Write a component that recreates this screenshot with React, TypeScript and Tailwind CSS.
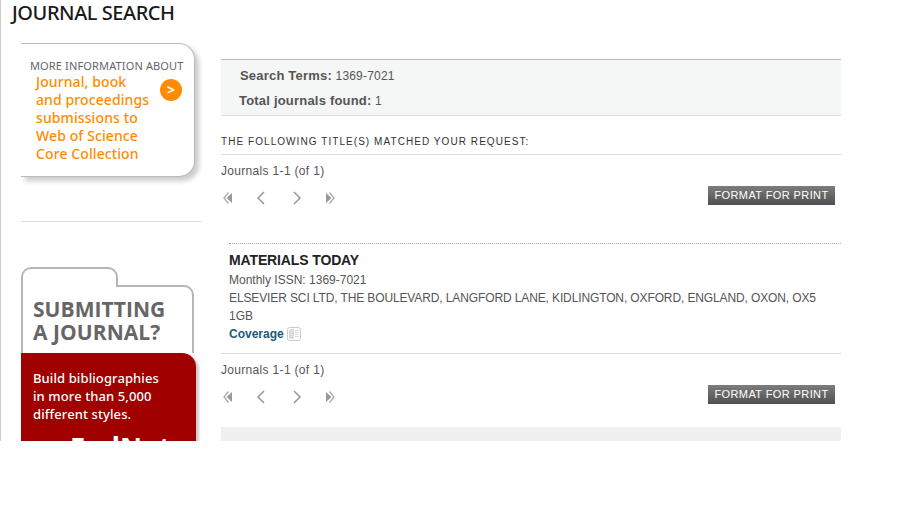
import React from "react";

function Pager() {
  return (
    <div className="flex items-center justify-between pr-[6px] h-[19px]">
      <div className="flex items-center pl-[2px] h-[19px] pt-[5px]">
        <svg width="10" height="14" viewBox="0 0 10 14" className="mr-[23px]">
          <path d="M5.5 1.5 L1 7 L5.5 12.5" fill="none" stroke="#aaa" strokeWidth="1.3" />
          <path d="M9 2 L3.5 7 L9 12 Z" fill="#999" />
        </svg>
        <svg width="9" height="14" viewBox="0 0 9 14" className="mr-[28px]">
          <path d="M8 1 L2 7 L8 13" fill="none" stroke="#999" strokeWidth="1.5" />
        </svg>
        <svg width="9" height="14" viewBox="0 0 9 14" className="mr-[23px]">
          <path d="M1 1 L7 7 L1 13" fill="none" stroke="#999" strokeWidth="1.5" />
        </svg>
        <svg width="10" height="14" viewBox="0 0 10 14">
          <path d="M4.5 1.5 L9 7 L4.5 12.5" fill="none" stroke="#aaa" strokeWidth="1.3" />
          <path d="M1 2 L6.5 7 L1 12 Z" fill="#999" />
        </svg>
      </div>
      <button className="w-[127px] h-[19px] bg-gradient-to-b from-[#7d7d7d] to-[#505050] text-white text-[11px] tracking-[0.4px] leading-[19px] text-center">
        FORMAT FOR PRINT
      </button>
    </div>
  );
}

export default function App() {
  return (
    <div className="h-[510px] w-[903px] bg-white overflow-hidden">
      <div className="h-[441px] overflow-hidden border-l border-[#ccc] font-['Liberation_Sans',sans-serif] text-[#555]">
        <h1 className="pl-[11px] h-[43px] font-['Noto_Sans',sans-serif] text-[20px] font-medium leading-[26px] tracking-[-0.45px] text-[#1a1a1a]">
          JOURNAL SEARCH
        </h1>
        <div className="flex pl-[20px]">
          <aside className="w-[180px] mr-[20px] font-['Noto_Sans',sans-serif]">
            <div className="w-[174px] h-[134px] rounded-r-[16px] bg-white border-t border-r border-b border-[#bbb] shadow-[4px_4px_5px_#ccc] pt-[14px] pl-[9px]">
              <p className="text-[11px] leading-[15px] tracking-[0.14px] text-[#666] whitespace-nowrap">MORE INFORMATION ABOUT</p>
              <div className="flex items-start">
                <p className="pl-[6px] w-[130px] text-[14px] leading-[18px] tracking-[0.1px] text-[#ff8c00] font-medium whitespace-nowrap">
                  Journal, book<br />
                  and proceedings<br />
                  submissions to<br />
                  Web of Science<br />
                  Core Collection
                </p>
                <div className="w-[22px] h-[22px] mt-[6px] rounded-full bg-[#ff8c00] text-white text-[14px] font-bold leading-[21px] text-center">
                  &gt;
                </div>
              </div>
            </div>
            <div className="mt-[44px] border-t border-[#ddd]" />
            <div className="mt-[45px] w-[173px]">
              <div className="relative z-10 w-[97px] h-[20px] -mb-[2px] bg-white border-2 border-b-0 border-[#b5b5b5] rounded-t-[10px]" />
              <div className="h-[68px] bg-white border-2 border-b-0 border-[#b5b5b5] rounded-tr-[10px] pl-[10px] pt-[11px] font-['Open_Sans',sans-serif] text-[21px] font-bold leading-[23px] text-[#666] tracking-[0.05px] whitespace-nowrap">
                SUBMITTING<br />A JOURNAL?
              </div>
              <div className="w-[175px] h-[120px] bg-[#a00000] rounded-tr-[14px] shadow-[3px_2px_3px_#ccc] pl-[12px] pt-[16px] text-white text-[13px] font-medium leading-[18px] tracking-[0.1px]">
                <p className="whitespace-nowrap">Build bibliographies<br />in more than 5,000<br />different styles.</p>
                <p className="pl-[37px] mt-[9px] text-[27px] font-bold leading-[30px] whitespace-nowrap">EndNote<sup className="text-[9px] font-normal">®</sup></p>
              </div>
            </div>
          </aside>
          <main className="w-[620px] pt-[16px]">
            <div className="h-[57px] bg-[#f5f6f6] border-t border-b border-t-[#bbb] border-b-[#ddd] text-[12px] leading-[25px] pt-[3px] tracking-[0.2px]">
              <p className="pl-[19px] -mb-[1px]"><b className="text-[13px]">Search Terms:</b> 1369-7021</p>
              <p className="pl-[18px]"><b className="text-[13px]">Total journals found:</b> 1</p>
            </div>
            <p className="h-[39px] pt-[19px] border-b border-[#ddd] text-[10px] leading-[13px] tracking-[1.06px] text-[#333] whitespace-nowrap">
              THE FOLLOWING TITLE(S) MATCHED YOUR REQUEST:
            </p>
            <p className="h-[31px] pt-[9px] text-[12px] leading-[14px] tracking-[0.32px]">Journals 1-1 (of 1)</p>
            <Pager />
            <div className="ml-[8px] mt-[38px] border-t border-dotted border-[#aaa] pt-[7px] h-[110px] text-[12px] leading-[18px]">
              <h2 className="text-[14px] leading-[18px] font-bold text-[#222] tracking-[-0.13px]">MATERIALS TODAY</h2>
              <p className="mt-[2px]">Monthly ISSN: 1369-7021</p>
              <p className="whitespace-nowrap tracking-[-0.12px]">ELSEVIER SCI LTD, THE BOULEVARD, LANGFORD LANE, KIDLINGTON, OXFORD, ENGLAND, OXON, OX5</p>
              <p>1GB</p>
              <p className="flex items-center gap-[3px] font-bold text-[#1c5a7d]">
                Coverage
                <svg width="14" height="14" viewBox="0 0 14 14">
                  <rect x="0.5" y="0.5" width="13" height="13" rx="2" fill="#fff" stroke="#ccc" />
                  <rect x="2" y="2" width="5" height="10" fill="#ddd" />
                  <path d="M8 3.5 H12 M8 5.5 H12 M8 7.5 H12 M8 9.5 H12" stroke="#ddd" />
                </svg>
              </p>
            </div>
            <div className="border-t border-[#ddd]" />
            <p className="h-[31px] pt-[9px] text-[12px] leading-[14px] tracking-[0.32px]">Journals 1-1 (of 1)</p>
            <Pager />
            <div className="mt-[23px] h-[14px] bg-[#f0f0f0]" />
          </main>
        </div>
      </div>
    </div>
  );
}
